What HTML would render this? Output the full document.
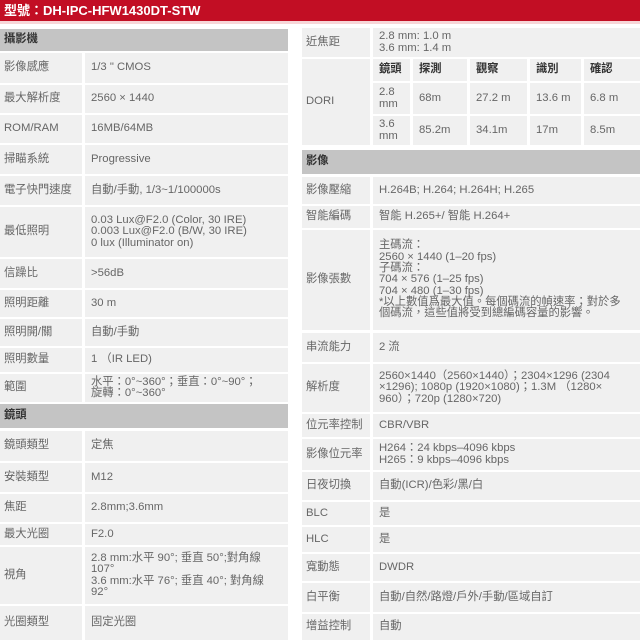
<!DOCTYPE html><html><head><meta charset="utf-8"><style>
body{margin:0;width:640px;height:640px;background:#fff;position:relative;overflow:hidden;font-family:"Liberation Sans","Noto Sans CJK TC",sans-serif}
.c{position:absolute;background:#f0f0f0;color:#666;font-size:11.3px;display:flex;align-items:center;padding-left:4px;line-height:11.3px;box-sizing:border-box;overflow:hidden;white-space:nowrap}
.h{background:#c4c4c4;color:#333;font-weight:bold}
.b{font-weight:bold;color:#333}
</style></head><body>
<div style="position:absolute;left:0;top:0;width:640px;height:21px;background:#c20e24;color:#fff;font-weight:bold;font-size:13px;line-height:21px;padding-left:4px">型號：DH-IPC-HFW1430DT-STW</div>
<div style="position:absolute;left:0;top:21px;width:640px;height:3px;background:#f7d6d8"></div>

<!-- left -->
<div class="c h" style="left:0;top:29px;width:288px;height:22px">攝影機</div>
<div class="c" style="left:0;top:53px;width:82px;height:30px">影像感應</div><div class="c" style="left:85px;top:53px;width:203px;height:30px;padding-left:6px">1/3 " CMOS</div>
<div class="c" style="left:0;top:85px;width:82px;height:28px">最大解析度</div><div class="c" style="left:85px;top:85px;width:203px;height:28px;padding-left:6px">2560 × 1440</div>
<div class="c" style="left:0;top:115px;width:82px;height:28px">ROM/RAM</div><div class="c" style="left:85px;top:115px;width:203px;height:28px;padding-left:6px">16MB/64MB</div>
<div class="c" style="left:0;top:145px;width:82px;height:29px">掃瞄系統</div><div class="c" style="left:85px;top:145px;width:203px;height:29px;padding-left:6px">Progressive</div>
<div class="c" style="left:0;top:176px;width:82px;height:29px">電子快門速度</div><div class="c" style="left:85px;top:176px;width:203px;height:29px;padding-left:6px">自動/手動, 1/3~1/100000s</div>
<div class="c" style="left:0;top:207px;width:82px;height:50px">最低照明</div><div class="c" style="left:85px;top:207px;width:203px;height:50px;padding-left:6px">0.03 Lux@F2.0 (Color, 30 IRE)<br>0.003 Lux@F2.0 (B/W, 30 IRE)<br>0 lux (Illuminator on)</div>
<div class="c" style="left:0;top:259px;width:82px;height:29px">信躁比</div><div class="c" style="left:85px;top:259px;width:203px;height:29px;padding-left:6px">&gt;56dB</div>
<div class="c" style="left:0;top:290px;width:82px;height:27px">照明距離</div><div class="c" style="left:85px;top:290px;width:203px;height:27px;padding-left:6px">30 m</div>
<div class="c" style="left:0;top:319px;width:82px;height:27px">照明開/關</div><div class="c" style="left:85px;top:319px;width:203px;height:27px;padding-left:6px">自動/手動</div>
<div class="c" style="left:0;top:348px;width:82px;height:24px">照明數量</div><div class="c" style="left:85px;top:348px;width:203px;height:24px;padding-left:6px">1 （IR LED)</div>
<div class="c" style="left:0;top:374px;width:82px;height:28px">範圍</div><div class="c" style="left:85px;top:374px;width:203px;height:28px;padding-left:6px">水平：0°~360°；垂直：0°~90°；<br>旋轉：0°~360°</div>
<div class="c h" style="left:0;top:404px;width:288px;height:24px">鏡頭</div>
<div class="c" style="left:0;top:431px;width:82px;height:30px">鏡頭類型</div><div class="c" style="left:85px;top:431px;width:203px;height:30px;padding-left:6px">定焦</div>
<div class="c" style="left:0;top:463px;width:82px;height:29px">安裝類型</div><div class="c" style="left:85px;top:463px;width:203px;height:29px;padding-left:6px">M12</div>
<div class="c" style="left:0;top:494px;width:82px;height:28px">焦距</div><div class="c" style="left:85px;top:494px;width:203px;height:28px;padding-left:6px">2.8mm;3.6mm</div>
<div class="c" style="left:0;top:524px;width:82px;height:21px">最大光圈</div><div class="c" style="left:85px;top:524px;width:203px;height:21px;padding-left:6px">F2.0</div>
<div class="c" style="left:0;top:547px;width:82px;height:57px">視角</div><div class="c" style="left:85px;top:547px;width:203px;height:57px;padding-left:6px">2.8 mm:水平 90°; 垂直 50°;對角線<br>107°<br>3.6 mm:水平 76°; 垂直 40°; 對角線<br>92°</div>
<div class="c" style="left:0;top:606px;width:82px;height:34px">光圈類型</div><div class="c" style="left:85px;top:606px;width:203px;height:34px;padding-left:6px">固定光圈</div>

<!-- right -->
<div class="c" style="left:302px;top:28px;width:68px;height:29px">近焦距</div><div class="c" style="left:373px;top:28px;width:267px;height:29px;padding-left:6px">2.8 mm: 1.0 m<br>3.6 mm: 1.4 m</div>
<div class="c" style="left:302px;top:59px;width:68px;height:86px">DORI</div>
<div class="c b" style="left:373px;top:59px;width:37px;height:22px;padding-left:6px">鏡頭</div>
<div class="c b" style="left:413px;top:59px;width:54px;height:22px;padding-left:6px">探測</div>
<div class="c b" style="left:470px;top:59px;width:57px;height:22px;padding-left:6px">觀察</div>
<div class="c b" style="left:530px;top:59px;width:51px;height:22px;padding-left:6px">識別</div>
<div class="c b" style="left:584px;top:59px;width:56px;height:22px;padding-left:6px">確認</div>
<div class="c" style="left:373px;top:83px;width:37px;height:31px;padding-left:6px">2.8<br>mm</div>
<div class="c" style="left:413px;top:83px;width:54px;height:31px;padding-left:6px">68m</div>
<div class="c" style="left:470px;top:83px;width:57px;height:31px;padding-left:6px">27.2 m</div>
<div class="c" style="left:530px;top:83px;width:51px;height:31px;padding-left:6px">13.6 m</div>
<div class="c" style="left:584px;top:83px;width:56px;height:31px;padding-left:6px">6.8 m</div>
<div class="c" style="left:373px;top:116px;width:37px;height:29px;padding-left:6px">3.6<br>mm</div>
<div class="c" style="left:413px;top:116px;width:54px;height:29px;padding-left:6px">85.2m</div>
<div class="c" style="left:470px;top:116px;width:57px;height:29px;padding-left:6px">34.1m</div>
<div class="c" style="left:530px;top:116px;width:51px;height:29px;padding-left:6px">17m</div>
<div class="c" style="left:584px;top:116px;width:56px;height:29px;padding-left:6px">8.5m</div>
<div class="c h" style="left:302px;top:150px;width:338px;height:24px">影像</div>
<div class="c" style="left:302px;top:177px;width:68px;height:27px">影像壓縮</div><div class="c" style="left:373px;top:177px;width:267px;height:27px;padding-left:6px">H.264B; H.264; H.264H; H.265</div>
<div class="c" style="left:302px;top:206px;width:68px;height:22px">智能編碼</div><div class="c" style="left:373px;top:206px;width:267px;height:22px;padding-left:6px">智能 H.265+/ 智能 H.264+</div>
<div class="c" style="left:302px;top:230px;width:68px;height:100px">影像張數</div><div class="c" style="left:373px;top:230px;width:267px;height:100px;padding-left:6px">主碼流：<br>2560 × 1440 (1–20 fps)<br>子碼流：<br>704 × 576 (1–25 fps)<br>704 × 480 (1–30 fps)<br>*以上數值爲最大值。每個碼流的幀速率；對於多<br>個碼流，這些值將受到總編碼容量的影響。</div>
<div class="c" style="left:302px;top:333px;width:68px;height:29px">串流能力</div><div class="c" style="left:373px;top:333px;width:267px;height:29px;padding-left:6px">2 流</div>
<div class="c" style="left:302px;top:364px;width:68px;height:48px">解析度</div><div class="c" style="left:373px;top:364px;width:267px;height:48px;padding-left:6px">2560×1440（2560×1440）；2304×1296 (2304<br>×1296); 1080p (1920×1080)；1.3M （1280×<br>960）；720p (1280×720)</div>
<div class="c" style="left:302px;top:414px;width:68px;height:23px">位元率控制</div><div class="c" style="left:373px;top:414px;width:267px;height:23px;padding-left:6px">CBR/VBR</div>
<div class="c" style="left:302px;top:439px;width:68px;height:31px">影像位元率</div><div class="c" style="left:373px;top:439px;width:267px;height:31px;padding-left:6px">H264：24 kbps–4096 kbps<br>H265：9 kbps–4096 kbps</div>
<div class="c" style="left:302px;top:472px;width:68px;height:28px">日夜切換</div><div class="c" style="left:373px;top:472px;width:267px;height:28px;padding-left:6px">自動(ICR)/色彩/黑/白</div>
<div class="c" style="left:302px;top:502px;width:68px;height:23px">BLC</div><div class="c" style="left:373px;top:502px;width:267px;height:23px;padding-left:6px">是</div>
<div class="c" style="left:302px;top:527px;width:68px;height:25px">HLC</div><div class="c" style="left:373px;top:527px;width:267px;height:25px;padding-left:6px">是</div>
<div class="c" style="left:302px;top:554px;width:68px;height:27px">寬動態</div><div class="c" style="left:373px;top:554px;width:267px;height:27px;padding-left:6px">DWDR</div>
<div class="c" style="left:302px;top:583px;width:68px;height:29px">白平衡</div><div class="c" style="left:373px;top:583px;width:267px;height:29px;padding-left:6px">自動/自然/路燈/戶外/手動/區域自訂</div>
<div class="c" style="left:302px;top:614px;width:68px;height:26px">增益控制</div><div class="c" style="left:373px;top:614px;width:267px;height:26px;padding-left:6px">自動</div>
</body></html>
